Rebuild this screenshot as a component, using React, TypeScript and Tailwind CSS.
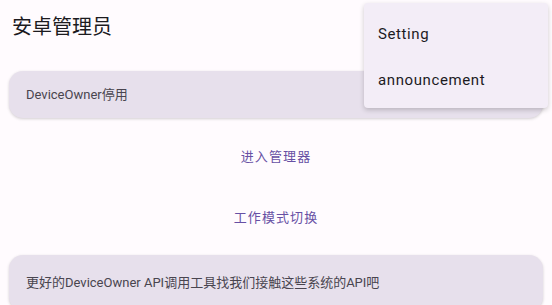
import React from 'react';

const font = { fontFamily: 'Roboto, "Noto Sans CJK SC", sans-serif' };

export default function App() {
  return (
    <div
      className="relative w-[552px] h-[305px] overflow-hidden bg-[#fffbfe] text-[#1c1b1f]"
      style={font}
    >
      {/* 顶部标题 */}
      <div className="h-[55px] pl-[12px] pt-[14px] text-[20px] leading-[26px]">安卓管理员</div>

      <div className="flex flex-col px-[9px] pt-[16px]">
        <div className="h-[47px] rounded-[14px] bg-[#e7e0ec] shadow-[0_1px_3px_rgba(0,0,0,0.18)] flex items-center pl-[17px] text-[13px] text-[#49454f]">
          DeviceOwner停用
        </div>

        <div className="mt-[19px] h-[40px] flex items-center justify-center text-[13px] tracking-[1.1px] text-[#6750a4]">
          进入管理器
        </div>
        <div className="mt-[21px] h-[40px] flex items-center justify-center text-[13px] tracking-[1.1px] text-[#6750a4]">
          工作模式切换
        </div>

        <div className="mt-[17px] h-[56px] rounded-[14px] bg-[#e7e0ec] shadow-[0_1px_3px_rgba(0,0,0,0.18)] flex items-start pt-[18px] pl-[17px] text-[13px] text-[#49454f]">
          更好的DeviceOwner API调用工具找我们接触这些系统的API吧
        </div>
      </div>

      {/* 弹出菜单 */}
      <div className="absolute left-[364px] top-[3px] w-[184px] h-[105px] rounded-[4px] bg-[#f3edf7] shadow-[0_2px_5px_rgba(0,0,0,0.2)] flex flex-col pt-[8px]">
        <div className="h-[46px] flex items-center pl-[14px] text-[15px] tracking-[0.6px]">Setting</div>
        <div className="h-[46px] flex items-center pl-[14px] text-[15px] tracking-[0.6px]">announcement</div>
      </div>
    </div>
  );
}
